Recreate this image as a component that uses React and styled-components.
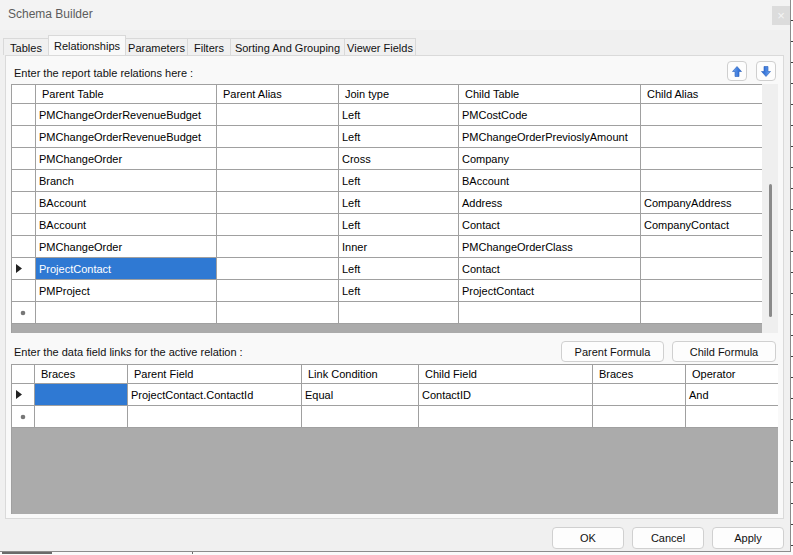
import React from 'react';
import styled, { createGlobalStyle } from 'styled-components';

const Global = createGlobalStyle`
  html, body { margin: 0; padding: 0; background: #ffffff; }
  body { font-family: 'Liberation Sans', Arial, sans-serif; font-size: 11px; color: #000; }
`;

const Screen = styled.div`
  width: 793px;
  height: 555px;
  display: flex;
  flex-direction: column;
  overflow: hidden;
  background: #fbfbfb;
`;

const Top = styled.div`
  display: flex;
  height: 552px;
`;

const Window = styled.div`
  width: 790px;
  height: 551px;
  display: flex;
  flex-direction: column;
  background: #f0f0f0;
  border-right: 1px solid #8c8c8c;
  border-bottom: 1px solid #8c8c8c;
`;

const Backdrop = styled.div`
  flex: 1;
  background: #ffffff;
  background-image: repeating-linear-gradient(to bottom, transparent 0 20px, #3a3a3a 20px 21px);
`;

const BottomStrip = styled.div`
  height: 3px;
  display: flex;
  background: #fafafa;
`;

const Fragment = styled.div`
  width: ${p => p.$w}px;
  margin-left: ${p => p.$x}px;
  height: 2px;
  background: #6a6a6a;
`;

const TitleBar = styled.div`
  height: 30px;
  display: flex;
  align-items: flex-start;
  justify-content: space-between;
  background: #f3f3f3;
`;

const Title = styled.div`
  padding: 7px 0 0 8px;
  font-size: 12px;
  color: #5c5c5c;
`;

const CloseBox = styled.div`
  margin-top: 6px;
  width: 18px;
  height: 19px;
  background: #dcdcdc;
  color: #f4f4f4;
  font-size: 13px;
  display: flex;
  align-items: center;
  justify-content: center;
`;

const TabStrip = styled.div`
  display: flex;
  align-items: flex-end;
  height: 20px;
  margin-top: 5px;
  padding-left: 4px;
`;

const Tab = styled.div`
  width: ${p => p.$w}px;
  height: ${p => (p.$active ? 20 : 17)}px;
  box-sizing: border-box;
  display: flex;
  align-items: center;
  justify-content: center;
  padding-top: ${p => (p.$active ? 0 : 1)}px;
  background: ${p => (p.$active ? '#f9f9f9' : '#f0f0f0')};
  border: 1px solid #d9d9d9;
  border-bottom: none;
  margin-left: -1px;
  position: relative;
  z-index: ${p => (p.$active ? 2 : 1)};
  color: #111;
`;

const Panel = styled.div`
  margin: 0 6px 0 5px;
  height: 464px;
  box-sizing: border-box;
  border: 1px solid #dadada;
  background: #f9f9f9;
  padding: 5px 4px 4px 5px;
  display: flex;
  flex-direction: column;
`;

const Bar = styled.div`
  display: flex;
  align-items: ${p => p.$align || 'center'};
  justify-content: space-between;
  height: ${p => p.$h}px;
  padding: ${p => p.$pad || '0'};
  padding-right: 3px;
`;

const Label = styled.div`
  padding-left: 3px;
  color: #111;
`;

const BtnGroup = styled.div`
  display: flex;
  gap: ${p => p.$gap}px;
  align-self: flex-start;
`;

const IconBtn = styled.div`
  width: 20px;
  height: 20px;
  box-sizing: border-box;
  border: 1px solid #cfcfcf;
  border-radius: 4px;
  background: #fdfdfd;
  display: flex;
  align-items: center;
  justify-content: center;
`;

const Button = styled.div`
  width: ${p => p.$w}px;
  height: ${p => p.$h}px;
  box-sizing: border-box;
  border: 1px solid #d0d0d0;
  border-radius: 4px;
  background: #fdfdfd;
  display: flex;
  align-items: center;
  justify-content: center;
  color: #111;
`;

const GridBox = styled.div`
  display: flex;
  height: ${p => p.$h}px;
  width: 767px;
`;

const Table = styled.div`
  flex: 1;
  background: #ababab;
  border-top: 1px solid #a0a0a0;
  border-left: 1px solid #a0a0a0;
  overflow: hidden;
`;

const Row = styled.div`
  display: grid;
  grid-template-columns: ${p => p.$cols};
  height: ${p => (p.$head ? 19 : 22)}px;
  background: #ffffff;
`;

const Cell = styled.div`
  box-sizing: border-box;
  border-right: 1px solid #a0a0a0;
  border-bottom: 1px solid #a0a0a0;
  padding-left: ${p => (p.$head ? 6 : 3)}px;
  display: flex;
  align-items: center;
  white-space: nowrap;
  overflow: hidden;
  background: ${p => (p.$sel ? '#2f79d3' : '#ffffff')};
  color: ${p => (p.$sel ? '#ffffff' : '#000000')};
`;

const RowHead = styled(Cell)`
  padding-left: ${p => (p.$new ? 8 : 4)}px;
`;

const Scroll = styled.div`
  width: 16px;
  background: #efefef;
  display: flex;
  justify-content: center;
  padding-top: 100px;
  box-sizing: border-box;
`;

const Thumb = styled.div`
  width: 3px;
  height: 133px;
  border-radius: 2px;
  background: #8a8a8a;
`;

const Footer = styled.div`
  flex: 1;
  display: flex;
  justify-content: flex-end;
  align-items: flex-start;
  gap: 8px;
  padding: 8px 6px 0 0;
`;

const Arrow = ({ down }) => (
  <svg width="10" height="11" viewBox="0 0 10 11">
    <defs>
      <linearGradient id={down ? 'ad' : 'au'} x1="0" x2="1" y1="0" y2="0">
        <stop offset="0" stopColor="#6fa6f0" />
        <stop offset="1" stopColor="#1d5fd0" />
      </linearGradient>
    </defs>
    <polygon
      transform={down ? 'rotate(180 5 5.5)' : undefined}
      points="5,0.5 9.5,5.5 7,5.5 7,10.5 3,10.5 3,5.5 0.5,5.5"
      fill={`url(#${down ? 'ad' : 'au'})`}
      stroke="#2a5fb8"
      strokeWidth="0.6"
    />
  </svg>
);

const Current = () => (
  <svg width="6" height="9" viewBox="0 0 6 9">
    <polygon points="0,0 6,4.5 0,9" fill="#222" />
  </svg>
);

const NewRow = () => (
  <svg width="6" height="6" viewBox="0 0 6 6">
    <circle cx="3" cy="3" r="2.3" fill="#777" />
  </svg>
);

const cols1 = '24px 181px 122px 120px 182px 122px';
const head1 = ['Parent Table', 'Parent Alias', 'Join type', 'Child Table', 'Child Alias'];
const rows1 = [
  ['PMChangeOrderRevenueBudget', '', 'Left', 'PMCostCode', ''],
  ['PMChangeOrderRevenueBudget', '', 'Left', 'PMChangeOrderPrevioslyAmount', ''],
  ['PMChangeOrder', '', 'Cross', 'Company', ''],
  ['Branch', '', 'Left', 'BAccount', ''],
  ['BAccount', '', 'Left', 'Address', 'CompanyAddress'],
  ['BAccount', '', 'Left', 'Contact', 'CompanyContact'],
  ['PMChangeOrder', '', 'Inner', 'PMChangeOrderClass', ''],
  ['ProjectContact', '', 'Left', 'Contact', ''],
  ['PMProject', '', 'Left', 'ProjectContact', ''],
];

const cols2 = '23px 93px 174px 117px 174px 93px 93px';
const head2 = ['Braces', 'Parent Field', 'Link Condition', 'Child Field', 'Braces', 'Operator'];
const rows2 = [['', 'ProjectContact.ContactId', 'Equal', 'ContactID', '', 'And']];

const DataGrid = ({ cols, head, rows, current, selCol }) => (
  <Table>
    <Row $cols={cols} $head>
      <Cell $head />
      {head.map((h, i) => (
        <Cell $head key={i}>{h}</Cell>
      ))}
    </Row>
    {rows.map((r, ri) => (
      <Row $cols={cols} key={ri}>
        <RowHead>{ri === current && <Current />}</RowHead>
        {r.map((c, ci) => (
          <Cell key={ci} $sel={ri === current && ci === selCol}>{c}</Cell>
        ))}
      </Row>
    ))}
    <Row $cols={cols}>
      <RowHead $new><NewRow /></RowHead>
      {head.map((h, i) => (
        <Cell key={i} />
      ))}
    </Row>
  </Table>
);

const tabs = [
  ['Tables', 46],
  ['Relationships', 78],
  ['Parameters', 63],
  ['Filters', 44],
  ['Sorting And Grouping', 115],
  ['Viewer Fields', 72],
];

const App = () => (
  <Screen>
    <Global />
    <Top>
      <Window>
        <TitleBar>
          <Title>Schema Builder</Title>
          <CloseBox>×</CloseBox>
        </TitleBar>
        <TabStrip>
          {tabs.map(([t, w]) => (
            <Tab key={t} $w={w} $active={t === 'Relationships'}>{t}</Tab>
          ))}
        </TabStrip>
        <Panel>
          <Bar $h={23}>
            <Label>Enter the report table relations here :</Label>
            <BtnGroup $gap={9}>
              <IconBtn><Arrow /></IconBtn>
              <IconBtn><Arrow down /></IconBtn>
            </BtnGroup>
          </Bar>
          <GridBox $h={249}>
            <DataGrid cols={cols1} head={head1} rows={rows1} current={7} selCol={0} />
            <Scroll><Thumb /></Scroll>
          </GridBox>
          <Bar $h={21} $pad="8px 0 2px 0">
            <Label>Enter the data field links for the active relation :</Label>
            <BtnGroup $gap={8}>
              <Button $w={103} $h={21}>Parent Formula</Button>
              <Button $w={104} $h={21}>Child Formula</Button>
            </BtnGroup>
          </Bar>
          <GridBox $h={150}>
            <DataGrid cols={cols2} head={head2} rows={rows2} current={0} selCol={0} />
          </GridBox>
        </Panel>
        <Footer>
          <Button $w={72} $h={22}>OK</Button>
          <Button $w={72} $h={22}>Cancel</Button>
          <Button $w={72} $h={22}>Apply</Button>
        </Footer>
      </Window>
      <Backdrop />
    </Top>
    <BottomStrip>
      <Fragment $x={2} $w={50} />
      <Fragment $x={140} $w={1} />
    </BottomStrip>
  </Screen>
);

export default App;
